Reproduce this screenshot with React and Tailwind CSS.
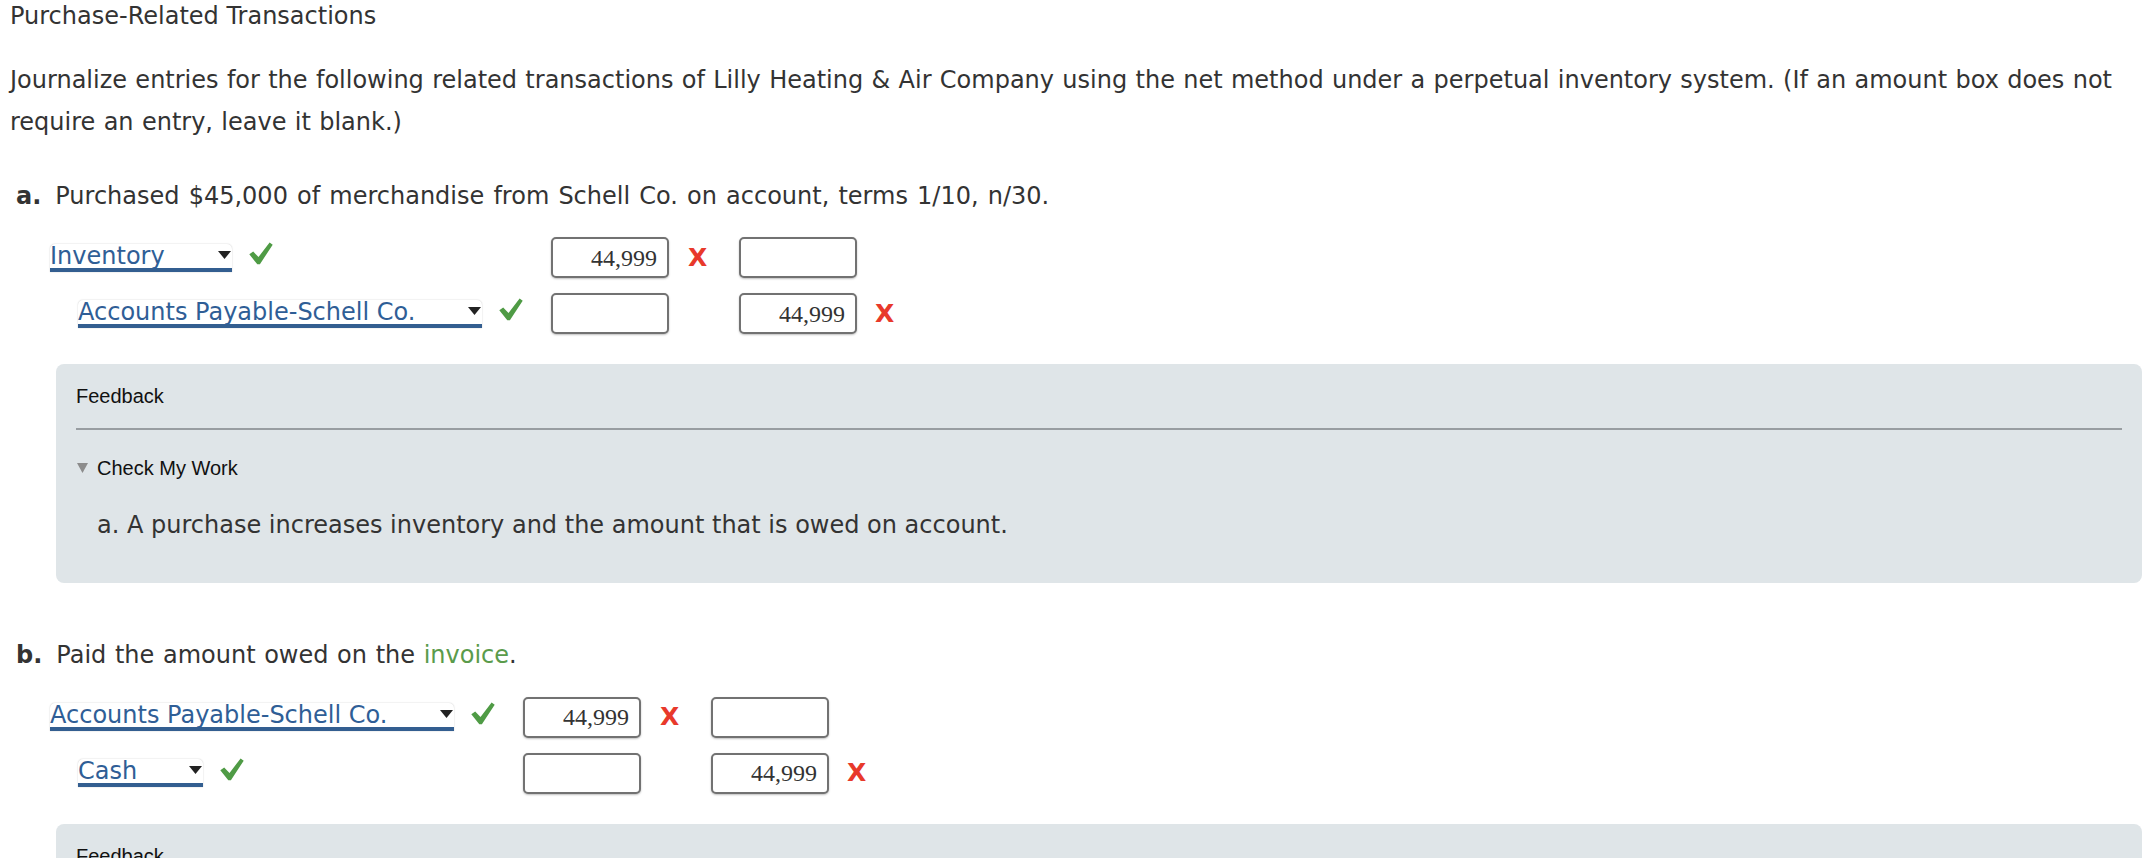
import React from "react";

function Check() {
  return (
    <svg width="24" height="23" viewBox="0 0 24 23" className="mb-[8px] shrink-0">
      <path d="M0.3 12.3 L4.2 9.6 L9.5 15 L20.6 0.4 L23.7 2.7 L10.9 22.3 L8.3 22.3 Z" fill="#4f9b45" />
    </svg>
  );
}

function RedX({ className = "" }) {
  return (
    <span
      className={`font-bold text-[25px] leading-[24px] text-[#e8392b] font-['DejaVu_Sans',Verdana,sans-serif] ${className}`}
    >
      X
    </span>
  );
}

function Select({ label, w }) {
  return (
    <div
      className={`flex items-center h-[28px] border-b-[4px] border-[#335e90] bg-white rounded-t-[5px] shadow-[0_0_1.5px_rgba(0,0,0,0.25)] ${w}`}
    >
      <span className="flex-1 leading-[24px] text-[#2f5e96] whitespace-nowrap">{label}</span>
      <svg width="13" height="8" viewBox="0 0 13 8" className="mr-[1px] mb-[2px] shrink-0">
        <path d="M0 0 L13 0 L6.5 8 Z" fill="#222" />
      </svg>
    </div>
  );
}

function Box({ value }) {
  return (
    <div className="w-[118px] h-[41px] border-2 border-[#727272] rounded-[5px] bg-white shadow-[0_1px_2px_rgba(0,0,0,0.25)] flex items-center justify-end pr-[10px] font-['Liberation_Serif','Times_New_Roman',serif] text-[24px] text-[#333] shrink-0">
      {value}
    </div>
  );
}

function Row({ col1, indent, label, selW, debit, credit }) {
  return (
    <div className="flex items-center h-[41px]">
      <div className={`flex items-center gap-[17px] shrink-0 ${col1} ${indent ? "pl-[28px]" : ""}`}>
        <Select label={label} w={selW} />
        <Check />
      </div>
      <Box value={debit} />
      <div className="w-[70px] shrink-0 pl-[19px] flex items-center">{debit ? <RedX /> : null}</div>
      <Box value={credit} />
      {credit ? <RedX className="ml-[18px]" /> : null}
    </div>
  );
}

function Feedback({ children }) {
  return (
    <div className="mt-[30px] ml-[56px] mr-[2px] rounded-[8px] bg-[#dfe5e8] pt-[20px] px-[20px] pb-[42px]">
      <div className="font-['Liberation_Sans',Arial,sans-serif] text-[20px] leading-[24px] text-[#111]">Feedback</div>
      <div className="mt-[20px] h-[2px] bg-[#989da1]" />
      <div className="mt-[26px] flex items-center gap-[9px] font-['Liberation_Sans',Arial,sans-serif] text-[20px] leading-[24px] text-[#111]">
        <svg width="11" height="10" viewBox="0 0 11 10" className="ml-[1px]">
          <path d="M0 0 L11 0 L5.5 10 Z" fill="#8c8c8c" />
        </svg>
        <span>Check My Work</span>
      </div>
      <div className="mt-[28.7px] pl-[21px] leading-[32px] text-[24px] text-[#333]">{children}</div>
    </div>
  );
}

export default function App() {
  return (
    <div className="w-[2144px] h-[858px] overflow-hidden bg-white text-[#333] font-['DejaVu_Sans',Verdana,sans-serif] text-[24px]">
      <div className="pl-[10px] leading-[32px]">Purchase-Related Transactions</div>
      <p className="pl-[10px] mt-[27px] leading-[42px] whitespace-nowrap [word-spacing:0.7px]">
        Journalize entries for the following related transactions of Lilly Heating &amp; Air Company using the net method under a perpetual inventory system. (If an amount box does not
        <br />
        require an entry, leave it blank.)
      </p>

      <div className="pl-[16px] mt-[31.5px] leading-[42px] [word-spacing:1.5px]">
        <b>a.</b>
        <span className="ml-[14px]">Purchased $45,000 of merchandise from Schell Co. on account, terms 1/10, n/30.</span>
      </div>
      <div className="ml-[50px] mt-[20.5px] flex flex-col gap-[15px]">
        <Row col1="w-[501px]" label="Inventory" selW="w-[182px]" debit="44,999" credit="" />
        <Row col1="w-[501px]" indent label="Accounts Payable-Schell Co." selW="w-[404px]" debit="" credit="44,999" />
      </div>
      <Feedback>a. A purchase increases inventory and the amount that is owed on account.</Feedback>

      <div className="pl-[16px] mt-[51px] leading-[42px] [word-spacing:1px]">
        <b>b.</b>
        <span className="ml-[14px]">
          Paid the amount owed on the <span className="text-[#5a9b4b]">invoice</span>.
        </span>
      </div>
      <div className="ml-[50px] mt-[21px] flex flex-col gap-[15px]">
        <Row col1="w-[473px]" label="Accounts Payable-Schell Co." selW="w-[404px]" debit="44,999" credit="" />
        <Row col1="w-[473px]" indent label="Cash" selW="w-[125px]" debit="" credit="44,999" />
      </div>
      <Feedback>b. Payment decreases the amount owed on account and cash.</Feedback>
    </div>
  );
}
